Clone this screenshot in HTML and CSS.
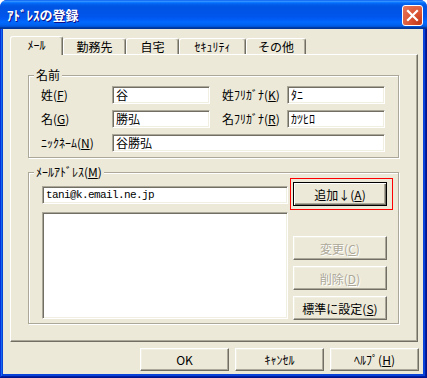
FILE: index.html
```html
<!DOCTYPE html>
<html lang="ja">
<head>
  <meta charset="UTF-8" />
  <title>ｱﾄﾞﾚｽの登録</title>
  <link rel="stylesheet" href="styles.css">
</head>
<body>
  <div class="window">
    <div class="titlebar">
      <span class="title">ｱﾄﾞﾚｽの登録</span>
      <div class="close">
        <svg width="13" height="13" viewBox="0 0 13 13">
          <path d="M2 2 L11 11 M11 2 L2 11" stroke="#fff" stroke-width="2.2" stroke-linecap="square" fill="none"/>
        </svg>
      </div>
    </div>

    <div class="frame">
      <div class="client">

        <!-- tabs -->
        <div class="tabs">
          <div class="tab active" style="width:53px">ﾒｰﾙ</div>
          <div class="tab" style="width:63px">勤務先</div>
          <div class="tab" style="width:53px">自宅</div>
          <div class="tab" style="width:67px">ｾｷｭﾘﾃｨ</div>
          <div class="tab" style="width:60px">その他</div>
        </div>

        <div class="panel">
          <!-- name group -->
          <div class="group">
            <div class="group-title">名前</div>
            <div class="name-grid">
              <div class="label">姓(<u>F</u>)</div>
              <div class="field">谷</div>
              <div></div>
              <div class="label">姓ﾌﾘｶﾞﾅ(<u>K</u>)</div>
              <div class="field">ﾀﾆ</div>

              <div class="label">名(<u>G</u>)</div>
              <div class="field">勝弘</div>
              <div></div>
              <div class="label">名ﾌﾘｶﾞﾅ(<u>R</u>)</div>
              <div class="field">ｶﾂﾋﾛ</div>

              <div class="label">ﾆｯｸﾈｰﾑ(<u>N</u>)</div>
              <div class="field wide">谷勝弘</div>
            </div>
          </div>

          <!-- mail group -->
          <div class="group mail">
            <div class="group-title">ﾒｰﾙｱﾄﾞﾚｽ(<u>M</u>)</div>
            <div class="mail-grid">
              <div class="mail-left">
                <div class="field mono">tani@k.email.ne.jp</div>
                <div class="field listbox"></div>
              </div>
              <div class="mail-right">
                <div class="highlight">
                  <div class="btn default">追加↓(<u>A</u>)</div>
                </div>
                <div class="btn side disabled first">変更(<u>C</u>)</div>
                <div class="btn side disabled">削除(<u>D</u>)</div>
                <div class="btn side">標準に設定(<u>S</u>)</div>
              </div>
            </div>
          </div>
        </div>

        <div class="buttons">
          <div class="btn bottom">OK</div>
          <div class="btn bottom">ｷｬﾝｾﾙ</div>
          <div class="btn bottom">ﾍﾙﾌﾟ(<u>H</u>)</div>
        </div>

      </div>
    </div>
  </div>
</body>
</html>
```

FILE: styles.css
```css
html, body {
  margin: 0;
  padding: 0;
}
body {
  background: #fff;
  font-family: "Noto Sans CJK JP", sans-serif;
  font-size: 12px;
  color: #000;
}
u {
  text-underline-offset: 1px;
}
.window {
  width: 427px;
  height: 378px;
  display: flex;
  flex-direction: column;
  background: #0831d9;
  border-radius: 7px 7px 0 0;
  overflow: hidden;
}
.titlebar {
  height: 29px;
  flex: none;
  display: flex;
  justify-content: space-between;
  align-items: flex-start;
  padding: 0 4px 0 7px;
  background: linear-gradient(to bottom, #0058ee 0%, #3a93ff 4%, #288eff 6%, #127dff 8%, #036ffc 10%, #0262ee 14%, #0057e5 20%, #0054e3 24%, #0055eb 56%, #005bf5 66%, #026afe 76%, #0062ef 86%, #0052d6 92%, #0040ab 94%, #003092 100%);
}
.title {
  color: #fff;
  font-weight: bold;
  font-size: 13px;
  line-height: 30px;
  text-shadow: 1px 1px #0f1089;
}
.close {
  width: 21px;
  height: 21px;
  margin-top: 5px;
  box-sizing: border-box;
  border: 1px solid #fff;
  border-radius: 3px;
  background: radial-gradient(circle at 85% 85%, #c33b1c 0%, #d9502f 35%, #e8795c 100%);
  display: flex;
  align-items: center;
  justify-content: center;
}
.frame {
  flex: 1;
  display: flex;
  padding: 0 4px 4px 3px;
  background: #0842d9;
  box-shadow: inset -1px -1px #00138c, inset 1px 0 #0831d9, inset -2px -2px #001ea0, inset 2px 0 #166aee;
}
.client {
  flex: 1;
  display: flex;
  flex-direction: column;
  background: #ece9d8;
  padding: 7px 5px 3px 7px;
}
.tabs {
  display: flex;
  align-items: flex-end;
  height: 18px;
}
.tab {
  height: 16px;
  box-sizing: border-box;
  border-top: 1px solid #fff;
  border-left: 1px solid #fff;
  border-right: 1px solid #716f64;
  box-shadow: inset -1px 0 #aca899;
  border-radius: 3px 3px 0 0;
  display: flex;
  align-items: center;
  justify-content: center;
  line-height: 14px;
  padding-top: 1px;
}
.tab.active {
  height: 19px;
  margin-bottom: -1px;
  padding-top: 0;
  padding-bottom: 3px;
  background: #ece9d8;
  position: relative;
  z-index: 1;
}
.panel {
  height: 288px;
  box-sizing: border-box;
  border: 1px solid;
  border-color: #fff #716f64 #716f64 #fff;
  box-shadow: inset -1px -1px #aca899;
  padding: 20px 0 0 17px;
}
.group {
  width: 371px;
  box-sizing: border-box;
  border: 1px solid #aca899;
  box-shadow: inset 1px 1px #fff, 1px 1px #fff;
}
.group.mail {
  margin-top: 14px;
}
.group-title {
  width: max-content;
  height: 14px;
  line-height: 14px;
  margin: -8px 0 -6px 5px;
  padding: 0 2px;
  background: #ece9d8;
}
.name-grid {
  display: grid;
  grid-template-columns: 71px 98px 12px 65px 98px;
  grid-auto-rows: 18px;
  row-gap: 6px;
  padding: 10px 0 5px 12px;
}
.label {
  line-height: 18px;
  white-space: nowrap;
}
.field {
  box-sizing: border-box;
  height: 18px;
  background: #fff;
  border: 1px solid;
  border-color: #aca899 #fff #fff #aca899;
  box-shadow: inset 1px 1px #716f64, inset -1px -1px #f1efe2;
  padding: 0 3px;
  line-height: 16px;
  white-space: nowrap;
}
.field.wide {
  grid-column: 2 / 6;
}
.field.mono {
  font-family: "Liberation Mono", monospace;
  font-size: 11px;
  letter-spacing: -0.6px;
}
.mail-grid {
  display: grid;
  grid-template-columns: 246px 103px;
  column-gap: 2px;
  padding-left: 13px;
}
.mail-left {
  display: flex;
  flex-direction: column;
  padding: 13px 0 4px;
}
.listbox {
  flex: 1;
  height: auto;
  margin-top: 8px;
}
.mail-right {
  display: flex;
  flex-direction: column;
  padding: 5px 0 3px;
}
.highlight {
  border: 1px solid #ff0000;
  padding: 3px 5px 3px 2px;
}
.btn {
  box-sizing: border-box;
  background: #ece9d8;
  border: 1px solid;
  border-color: #fff #716f64 #716f64 #fff;
  box-shadow: inset -1px -1px #aca899, inset 1px 1px #f1efe2;
  display: flex;
  align-items: center;
  justify-content: center;
  white-space: nowrap;
}
.btn.default {
  width: 94px;
  height: 24px;
  border-color: #000;
  box-shadow: inset 1px 1px #fff, inset -1px -1px #716f64, inset -2px -2px #aca899;
}
.btn.side {
  width: 94px;
  height: 24px;
  margin: 6px 0 0 3px;
}
.btn.side.first {
  margin-top: 26px;
}
.btn.disabled {
  color: #aca899;
  text-shadow: 1px 1px #fff;
}
.buttons {
  display: flex;
  justify-content: flex-end;
  gap: 6px;
  margin: 6px -1px 0 0;
}
.btn.bottom {
  width: 89px;
  height: 23px;
}
```
